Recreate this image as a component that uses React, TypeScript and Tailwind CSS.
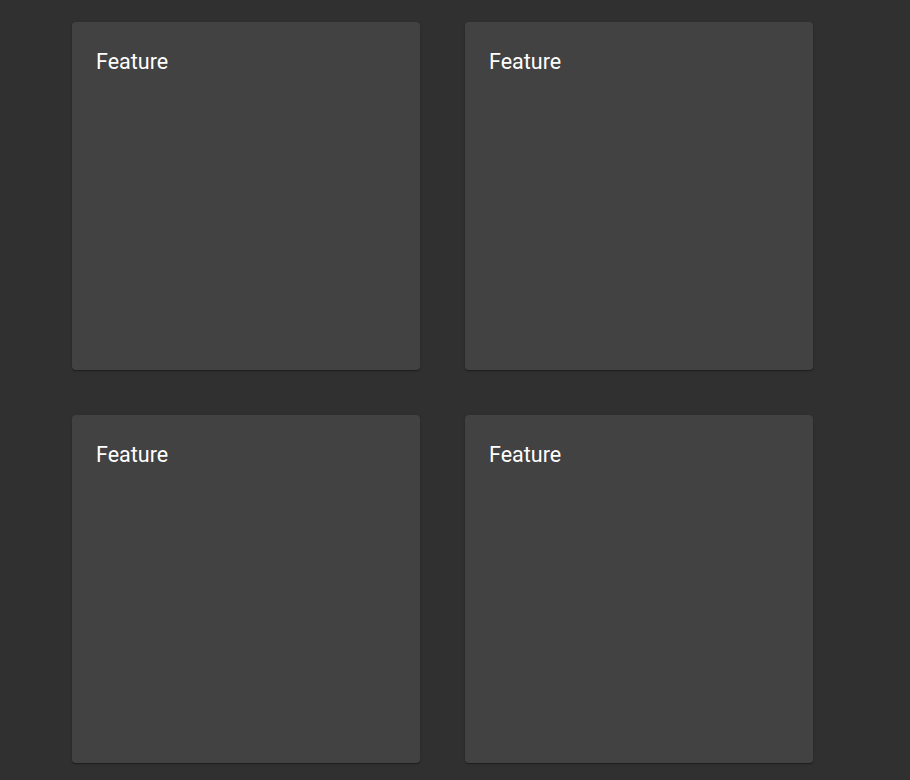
const cards = ['Feature', 'Feature', 'Feature', 'Feature']

export default function App() {
  return (
    <div className="min-h-screen bg-[#303030] pt-[22px] pl-[72px] font-['Roboto',sans-serif]">
      <div className="grid grid-cols-[348px_348px] gap-[45px]">
        {cards.map((title, i) => (
          <div
            key={i}
            className="h-[348px] rounded bg-[#424242] px-6 pt-[26px] shadow-[0_2px_1px_-1px_rgba(0,0,0,0.2),0_1px_1px_0_rgba(0,0,0,0.14),0_1px_3px_0_rgba(0,0,0,0.12)]"
          >
            <h2 className="text-[21.5px] font-normal leading-[28px] text-white">{title}</h2>
          </div>
        ))}
      </div>
    </div>
  )
}
